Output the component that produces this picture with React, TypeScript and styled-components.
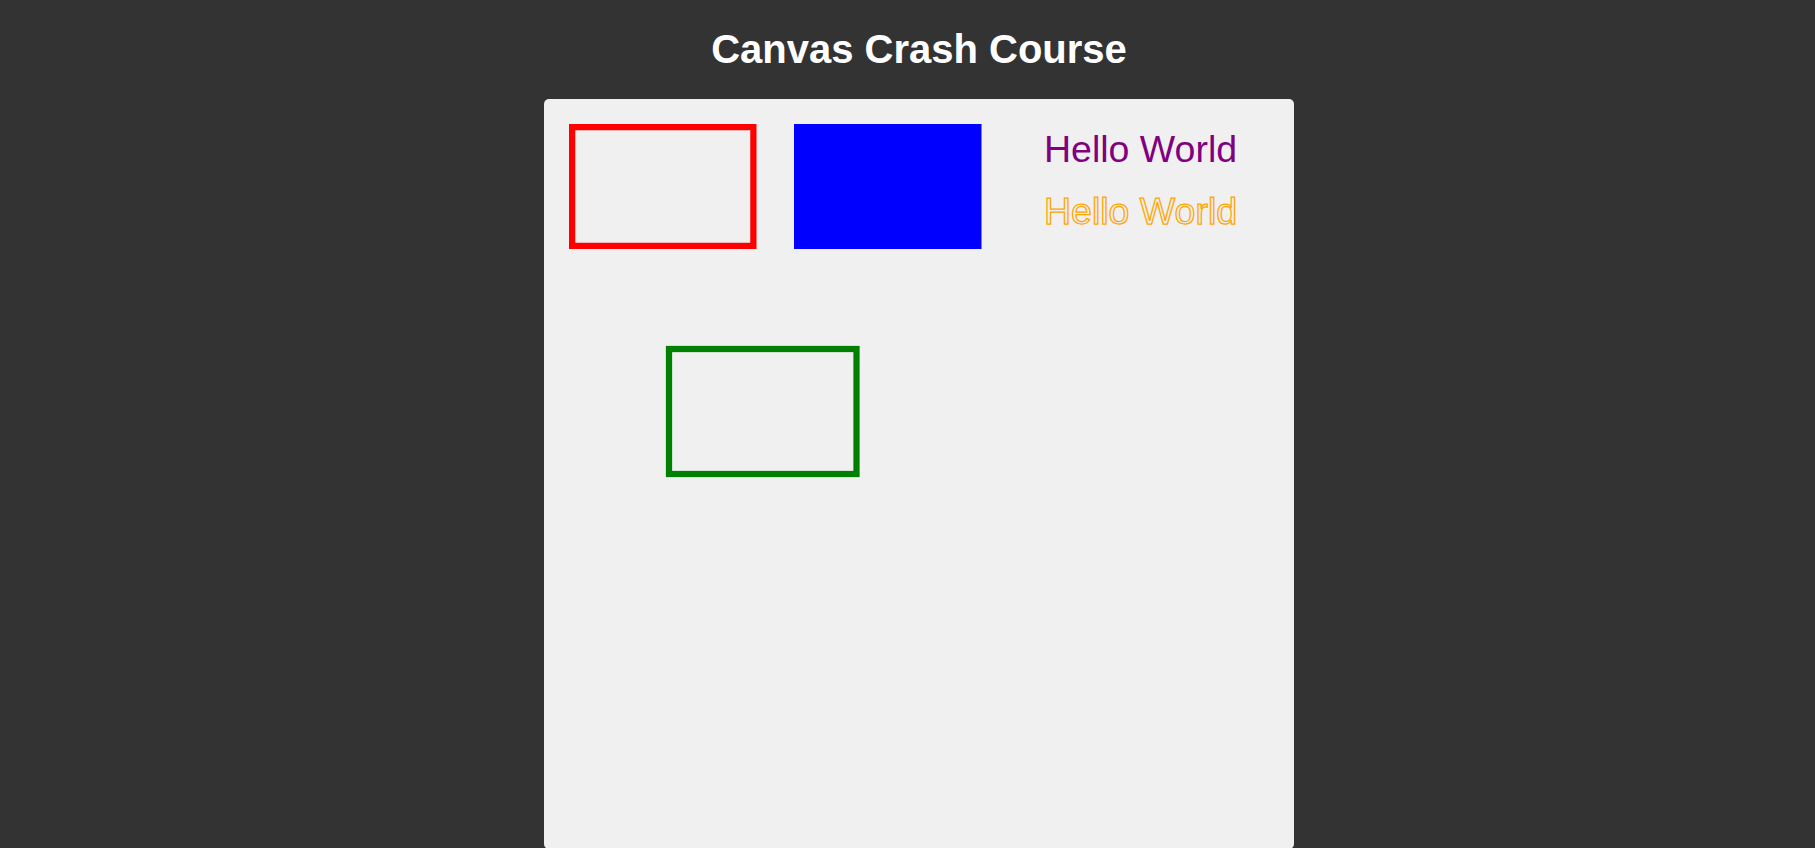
import styled, { createGlobalStyle } from 'styled-components';

const GlobalStyle = createGlobalStyle`
	body {
		margin: 0;
		background: #333;
		font-family: "Liberation Sans", Arial, sans-serif;
		overflow: hidden;
	}
`

const Page = styled.main`
	display: flex;
	flex-direction: column;
	align-items: center;
	padding-left: 23px;
`

const Title = styled.h1`
	margin: 26px 0 27px;
	font-size: 40px;
	line-height: 46px;
	font-weight: 700;
	color: #fff;
`

// drawing surface, 600 units wide shown at 1.25x
const Board = styled.svg`
	display: block;
	width: 750px;
	height: 750px;
	background: #f0f0f0;
	border-radius: 5px;
`

const BoardText = styled.text<{ $outline?: boolean }>`
	font-family: "Liberation Sans", Arial, sans-serif;
	font-size: 30px;
	fill: ${p => (p.$outline ? 'none' : '#800080')};
	stroke: ${p => (p.$outline ? '#ffa500' : 'none')};
	stroke-width: 1;
`

const App = () => {
	return (
		<>
			<GlobalStyle />
			<Page>
				<Title>Canvas Crash Course</Title>
				<Board viewBox='0 0 600 600'>
					<rect x={22.5} y={22.5} width={145} height={95} fill='none' stroke='#ff0000' strokeWidth={5} />
					<rect x={200} y={20} width={150} height={100} fill='#0000ff' />
					<rect x={100} y={200} width={150} height={100} fill='none' stroke='#008000' strokeWidth={5} />
					<BoardText x={400} y={50}>Hello World</BoardText>
					<BoardText x={400} y={100} $outline>Hello World</BoardText>
				</Board>
			</Page>
		</>
	)
}

export default App;
